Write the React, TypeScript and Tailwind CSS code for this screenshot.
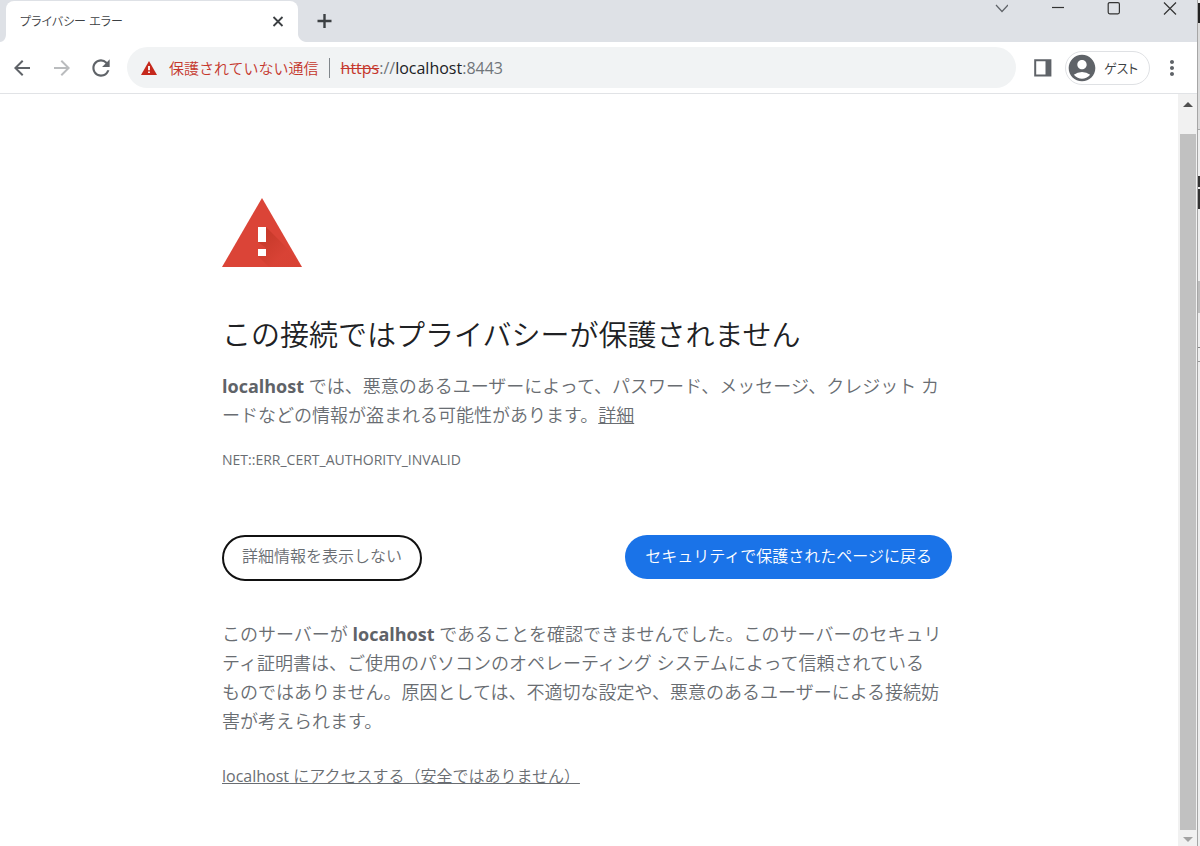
import type { ReactNode } from "react";
import { MdAccountCircle, MdArrowBack, MdArrowForward, MdMoreVert, MdRefresh } from "react-icons/md";

const IconButton = ({ label, className = "", children }: { label: string; className?: string; children: ReactNode }) => (
  <button type="button" aria-label={label} className={`flex shrink-0 items-center justify-center ${className}`}>
    {children}
  </button>
);

const TabStrip = () => (
  <div className="flex h-[42px] shrink-0 items-end bg-[#dee1e6]">
    <svg width="6" height="8" viewBox="0 0 6 8" className="shrink-0 fill-white">
      <path d="M6 0v8H0C4 8 6 4 6 0z" />
    </svg>
    <div className="flex h-[41px] w-[292px] items-center justify-between rounded-t-lg bg-white pr-3 pl-[14px]">
      <span className="text-[12px] leading-5 font-[350] text-[#3c4043] [font-feature-settings:'palt']">
        プライバシー エラー
      </span>
      <IconButton label="タブを閉じる" className="h-4 w-4">
        <svg width="16" height="16" viewBox="0 0 16 16" fill="none" stroke="#3c4043" strokeWidth="1.8">
          <path d="M3.5 3l9 9M12.5 3l-9 9" />
        </svg>
      </IconButton>
    </div>
    <svg width="8" height="8" viewBox="0 0 8 8" className="shrink-0 fill-white">
      <path d="M0 0v8h8C4 8 0 4 0 0z" />
    </svg>
    <IconButton label="新しいタブ" className="ml-2 h-[42px] w-5">
      <svg width="16" height="16" viewBox="0 0 16 16" fill="none" stroke="#3c4043" strokeWidth="2.4">
        <path d="M8.5 1v14M1.5 8h14" />
      </svg>
    </IconButton>
    <div className="ml-auto flex h-full items-start">
      <IconButton label="タブを検索" className="h-4 w-14">
        <svg width="14" height="14" viewBox="0 0 14 14" fill="none" stroke="#5f6368" strokeWidth="1.2">
          <path d="M2 4l6 6.5L14 4" />
        </svg>
      </IconButton>
      <IconButton label="最小化" className="h-4 w-14">
        <svg width="14" height="14" viewBox="0 0 14 14" fill="none" stroke="#333" strokeWidth="1.2">
          <path d="M2 6.5h12" />
        </svg>
      </IconButton>
      <IconButton label="最大化" className="h-4 w-14">
        <svg width="14" height="14" viewBox="0 0 14 14" fill="none" stroke="#333" strokeWidth="1.2">
          <rect x="2.2" y="1.6" width="11.2" height="11.2" rx="1.5" />
        </svg>
      </IconButton>
      <IconButton label="閉じる" className="h-4 w-14">
        <svg width="16" height="14" viewBox="0 0 16 14" fill="none" stroke="#333" strokeWidth="1.2">
          <path d="M3 1.5l12 12M15 1.5l-12 12" />
        </svg>
      </IconButton>
    </div>
  </div>
);

const Toolbar = () => (
  <div className="flex h-[52px] shrink-0 items-center border-b border-[#e1e3e6] bg-white pr-[13px] pl-[10px] text-[#5f6368]">
    <IconButton label="戻る" className="w-6">
      <MdArrowBack size={24} />
    </IconButton>
    <IconButton label="進む" className="ml-4 w-6 text-[#babcbe]">
      <MdArrowForward size={24} />
    </IconButton>
    <IconButton label="再読み込み" className="ml-[14px] w-[26px]">
      <MdRefresh size={26} />
    </IconButton>
    <div className="ml-[13px] flex h-[41px] min-w-0 flex-1 items-center rounded-full bg-[#f1f3f4] pl-[14px]">
      <button type="button" className="flex items-center text-[15px] leading-6 font-[350] text-[#c5372c]">
        <svg width="16" height="14" viewBox="0 0 16 14" className="mr-3">
          <path d="M8 0l8 14H0z" fill="#c5281c" />
          <path d="M7.1 5h1.8v4.2H7.1zM7.1 10.4h1.8V12H7.1z" fill="#fff" />
        </svg>
        保護されていない通信
      </button>
      <span className="mr-[11px] ml-[10px] h-5 w-px bg-[#80868b]" />
      <div
        role="textbox"
        aria-label="アドレスバー"
        tabIndex={0}
        className="text-[16px] leading-6 whitespace-nowrap text-[#70757a]"
      >
        <s className="text-[#c5372c]">https</s>://<span className="text-[#202124]">localhost</span>:8443
      </div>
    </div>
    <IconButton label="サイドパネル" className="ml-[18px] w-[18px]">
      <svg width="18" height="18" viewBox="0 0 18 18" fill="none">
        <path d="M1.2 1.2h15.2v15.2H1.2z" stroke="#5f6368" strokeWidth="2" />
        <path d="M11.5 1h5v15.5h-5z" fill="#5f6368" />
      </svg>
    </IconButton>
    <button
      type="button"
      className="ml-[13px] flex h-[34px] w-[85px] shrink-0 items-center rounded-full border border-[#dfe1e4] text-[13px] leading-5 font-[350] text-[#3c4043]"
    >
      <MdAccountCircle size={32} className="shrink-0" color="#5f6368" />
      <span className="ml-[6px] whitespace-nowrap [font-feature-settings:'palt']">ゲスト</span>
    </button>
    <IconButton label="メニュー" className="ml-[10px] w-6">
      <MdMoreVert size={24} />
    </IconButton>
  </div>
);

const Warning = () => (
  <main className="min-w-0 flex-1 overflow-hidden pr-1">
    <div className="mx-auto w-full max-w-[730px] pt-[104px] text-[18px] leading-[29px] font-[350] text-[#696d72]">
      <svg width="80" height="69" viewBox="0 0 80 69">
        <defs>
          <linearGradient id="shade" gradientUnits="userSpaceOnUse" x1="38" y1="36" x2="60" y2="58">
            <stop offset="0" stopColor="#a52714" stopOpacity="0.4" />
            <stop offset="1" stopColor="#a52714" stopOpacity="0.05" />
          </linearGradient>
        </defs>
        <path d="M40 0l40 69H0z" fill="#db4437" />
        <path d="M44 29l21 21 15 19H47L36 58l8-8-8-6z" fill="url(#shade)" />
        <path d="M36 29h8v15h-8zM36 51h8v7h-8z" fill="#fff" />
      </svg>
      <h1 className="mt-[50px] text-[29px] leading-9 text-[#202124]">この接続ではプライバシーが保護されません</h1>
      <p className="mt-[19px]">
        <strong className="font-bold text-[#5f6368]">localhost</strong>{" "}
        では、悪意のあるユーザーによって、パスワード、メッセージ、クレジット カ
        <br />
        ードなどの情報が盗まれる可能性があります。
        <a href="#details" className="underline">
          詳細
        </a>
      </p>
      <p className="mt-5 text-[14px] leading-5 font-normal">NET::ERR_CERT_AUTHORITY_INVALID</p>
      <div className="mt-[65px] flex items-start justify-between text-[16px] leading-6">
        <button type="button" className="h-[46px] rounded-full border-2 border-[#111] px-[18px] pb-1">
          詳細情報を表示しない
        </button>
        <button type="button" className="h-11 rounded-full bg-[#1a73e8] px-5 pb-[2px] text-white">
          セキュリティで保護されたページに戻る
        </button>
      </div>
      <p className="mt-[39px]">
        このサーバーが <strong className="font-bold text-[#5f6368]">localhost</strong>{" "}
        であることを確認できませんでした。このサーバーのセキュリ
        <br />
        ティ証明書は、ご使用のパソコンのオペレーティング システムによって信頼されている
        <br />
        ものではありません。原因としては、不適切な設定や、悪意のあるユーザーによる接続妨
        <br />
        害が考えられます。
      </p>
      <p className="mt-7 text-[16px] leading-6">
        <a href="#proceed" className="underline">
          <span className="font-normal">localhost</span> にアクセスする（安全ではありません）
        </a>
      </p>
    </div>
  </main>
);

const Scrollbar = () => (
  <div className="flex w-[19px] shrink-0 flex-col items-center bg-[#f1f1f1]">
    <svg width="10" height="40" viewBox="0 0 10 40" className="shrink-0">
      <path d="M0 13l5-5 5 5z" fill="#505050" />
    </svg>
    <div className="w-4 flex-1 bg-[#c1c1c1]" />
    <svg width="10" height="16" viewBox="0 0 10 16" className="shrink-0">
      <path d="M0 7h10l-5 5z" fill="#a3a3a3" />
    </svg>
  </div>
);

// Sliver of the window that sits behind this one
const BackWindow = () => (
  <div className="flex w-[3px] shrink-0 flex-col border-l border-[#a6a6a6] bg-[#eeeeee]">
    <div className="mt-[3px] h-5 bg-[#222]" />
    <div className="h-[107px] border-b border-[#a8a8a8] bg-[#dcdcdc]" />
    <div className="h-[46px]" />
    <div className="h-[11px] bg-[#333]" />
    <div className="mt-[2px] h-5 bg-[#333]" />
    <div className="mt-[72px] h-8 bg-[#bdbdbd]" />
    <div className="h-[35px] border-b border-[#888]" />
    <div className="h-[14px] border-b border-[#999]" />
  </div>
);

const App = () => {
  return (
    <div className="flex h-screen overflow-hidden bg-white font-['Open_Sans','Noto_Sans_CJK_JP',sans-serif]">
      <div className="flex min-w-0 flex-1 flex-col">
        <TabStrip />
        <Toolbar />
        <div className="flex min-h-0 flex-1">
          <Warning />
          <Scrollbar />
        </div>
      </div>
      <BackWindow />
    </div>
  );
};

export default App;
